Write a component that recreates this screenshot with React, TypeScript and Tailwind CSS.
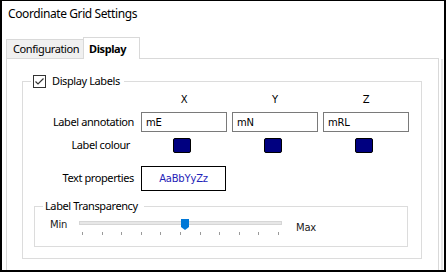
import React from 'react';

const tahoma = "font-['DejaVu_Sans',sans-serif] text-[10px] tracking-[-0.2px]";

const Checkbox: React.FC = () => (
  <span className="w-[13px] h-[13px] border border-[#333333] bg-white flex items-center justify-center">
    <svg width="11" height="11" viewBox="0 0 11 11">
      <path d="M1.5 5.5 L4 8 L9.5 2.5" fill="none" stroke="#333333" strokeWidth="1.2" />
    </svg>
  </span>
);

const Swatch: React.FC = () => (
  <div className="ml-[5px] w-[86px] flex justify-center pr-[5px]">
    <div className="w-[18px] h-[15px] rounded-[2px] bg-[#000080] border border-black" />
  </div>
);

const TextBox: React.FC<{ value: string }> = ({ value }) => (
  <div className={`ml-[5px] w-[86px] h-[20px] border border-[#7a7a7a] pl-[4px] flex items-center text-black ${tahoma}`}>
    {value}
  </div>
);

export default function App() {
  const ticks = Array.from({ length: 11 }, (_, i) => i);

  return (
    <div className="w-[446px] h-[272px] overflow-hidden bg-white border-black border-l-2 border-r-2 border-t border-b-2 flex flex-col font-['Noto_Sans',sans-serif] text-[11px] tracking-[-0.4px] text-black">
      <div className="h-[36px] shrink-0 pl-[6px] pt-[5px] text-[12px] leading-[16px]">Coordinate Grid Settings</div>

      {/* Tabs */}
      <div className="relative z-10 h-[22px] shrink-0 ml-[4px] flex items-end">
        <div className="w-[77px] h-[19px] mb-px pl-[6px] flex items-center bg-[#f0f0f0] border-l border-t border-[#d9d9d9]">
          Configuration
        </div>
        <div className="w-[57px] h-[22px] pl-[5px] pt-px flex items-center bg-white border-l border-t border-r border-[#d9d9d9] font-bold">
          Display
        </div>
      </div>

      <div className="flex flex-1 -mt-px">
        <div className="ml-[4px] w-[433px] border-l border-t border-r border-[#d9d9d9] bg-white">
          <fieldset className="ml-[15px] mt-[14px] w-[400px] border border-[#dcdcdc] pb-[11px]">
            <legend className="ml-[8px] pl-[2px] pr-[4px]">
              <span className="h-[16px] flex items-center gap-[6px]">
                <Checkbox />
                Display Labels
              </span>
            </legend>

            <div className={`mt-[4px] h-[14px] flex leading-[14px] ${tahoma}`}>
              <div className="w-[113px]" />
              <div className="ml-[5px] w-[86px] text-center">X</div>
              <div className="ml-[5px] w-[86px] text-center">Y</div>
              <div className="ml-[5px] w-[86px] text-center">Z</div>
            </div>

            <div className="mt-[5px] h-[20px] flex items-center">
              <div className="w-[113px] text-right pr-[2px]">Label annotation</div>
              <TextBox value="mE" />
              <TextBox value="mN" />
              <TextBox value="mRL" />
            </div>

            <div className="mt-[6px] h-[15px] flex items-center">
              <div className="w-[113px] text-right pr-[6px]">Label colour</div>
              <Swatch />
              <Swatch />
              <Swatch />
            </div>

            <div className="mt-[13px] h-[25px] flex items-center">
              <div className="w-[113px] text-right pr-[2px]">Text properties</div>
              <div className={`ml-[5px] w-[85px] h-[25px] border border-black flex items-center justify-center text-[#1f24b8] ${tahoma}`}>
                AaBbYyZz
              </div>
            </div>

            <fieldset className="ml-[11px] mt-[7px] w-[374px] border border-[#dcdcdc]">
              <legend className="ml-[8px] pl-[2px] pr-[6px] h-[16px] leading-[16px]">Label Transparency</legend>
              <div className={`h-[32px] pl-[15px] flex items-start leading-[12px] text-[#1a1a1a] ${tahoma}`}>
                <div className="w-[29px] mt-[5px]">Min</div>
                <div className="relative w-[203px]">
                  <div className="mt-[7px] h-[4px] bg-[#e7e7e7] border border-[#d6d6d6]" />
                  <div className="mt-[7px] px-[3px] flex justify-between">
                    {ticks.map((t) => (
                      <div key={t} className="w-px h-[3px] bg-[#9a9a9a]" />
                    ))}
                  </div>
                  <svg className="absolute left-[102px] top-[5px]" width="8" height="11" viewBox="0 0 8 11">
                    <path d="M0 0 H8 V8 L4 11 L0 8 Z" fill="#0078d7" />
                  </svg>
                </div>
                <div className="ml-[14px] mt-[8px]">Max</div>
              </div>
            </fieldset>
          </fieldset>
        </div>
        <div className="ml-[2px] mt-px w-[2px] bg-[#e5e5e5]" />
      </div>
    </div>
  );
}
